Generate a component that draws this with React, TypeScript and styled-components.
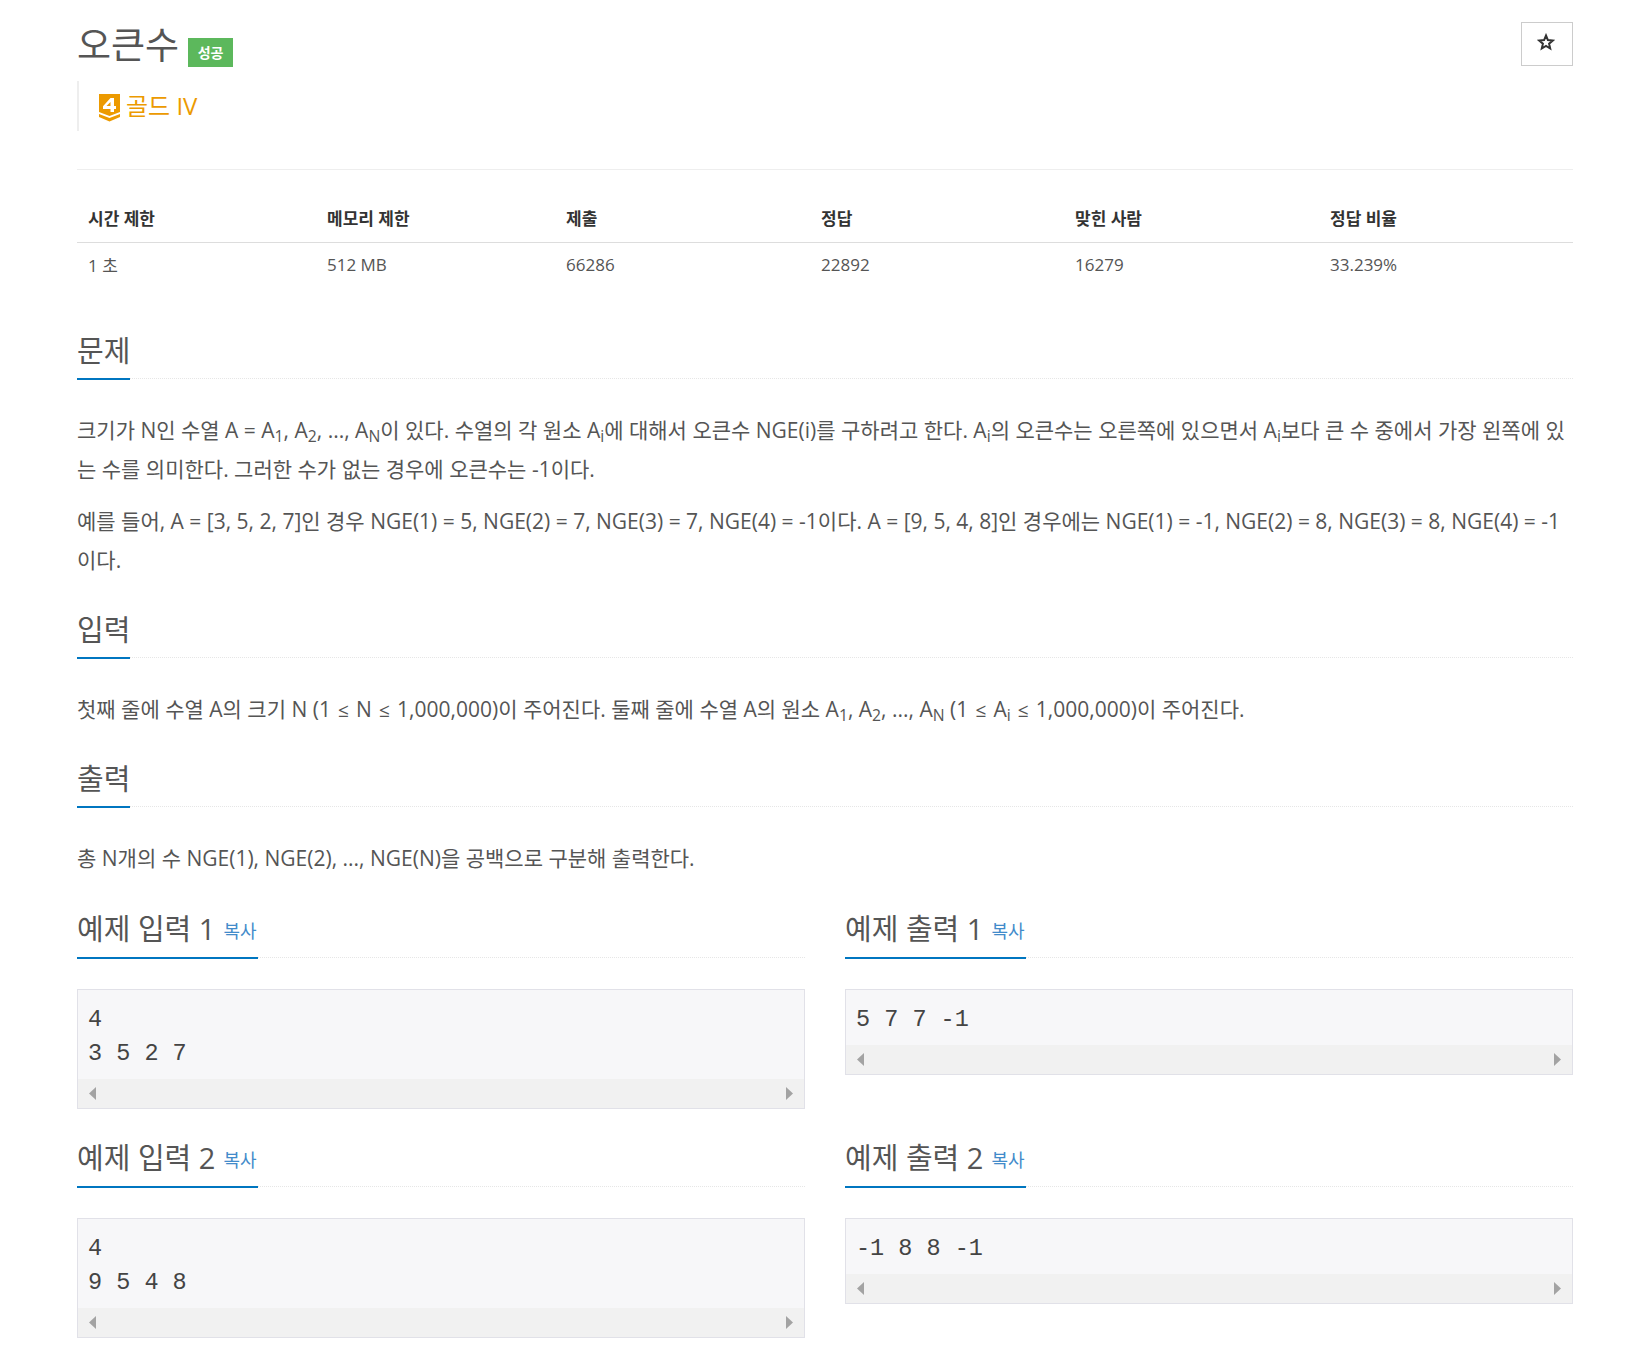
import React from "react";
import styled, { createGlobalStyle } from "styled-components";

const Global = createGlobalStyle`
  html, body { margin: 0; padding: 0; background: #fff; }
  body { font-family: "Open Sans", "Noto Sans CJK KR", sans-serif; color: #333; }
  * { box-sizing: border-box; }
`;
const Page = styled.div`
  width: 1640px; height: 1363px; padding: 0 67px 0 77px; overflow: hidden;
`;
const TitleBar = styled.div`
  display: flex; justify-content: space-between; align-items: flex-start; height: 81px; padding-top: 22px;
`;
const TitleGroup = styled.div`display: flex; align-items: flex-start; gap: 9px;`;
const Title = styled.h1`
  margin: 1px 0 0; font-size: 37px; font-weight: 400; line-height: 44px; color: #555;
`;
const Badge = styled.span`
  margin-top: 16px; width: 45px; height: 29px; background: #5cb85c; color: #fff; padding-bottom: 2px;
  font-size: 14px; font-weight: 700; display: flex; align-items: center; justify-content: center;
`;
const StarButton = styled.button`
  width: 52px; height: 44px; border: 1px solid #ccc; background: #fff; padding: 0 2px 5px 0;
  display: flex; align-items: center; justify-content: center; color: #333;
`;
const Tier = styled.div`
  height: 50px; border-left: 2px solid #eee; padding: 0 0 0 20px; display: flex; align-items: center; gap: 5px;
  color: #ec9a00; font-size: 24px; line-height: 30px;
  svg { margin-top: 4px; }
`;
const Divider = styled.hr`margin: 38px 0 0; border: 0; border-top: 1px solid #eee;`;
const Table = styled.table`
  width: 100%; margin-top: 22px; border-collapse: collapse; table-layout: fixed; font-size: 17px;
  th { text-align: left; font-weight: 700; padding: 2px 11px 0; height: 50px; border-bottom: 1px solid #ddd; color: #333; }
  td { padding: 0 11px; height: 44px; color: #555; }
`;
const Section = styled.section<{ $top: number }>`margin-top: ${p => p.$top}px;`;
const Heading = styled.div`
  border-bottom: 1px dotted #e6e6e6; height: 47px; display: flex;
`;
const HeadingText = styled.h2<{ $wide?: boolean }>`
  margin: 0 0 -1px; height: 48px; border-bottom: 2px solid #0076c0; padding-top: ${p => p.$wide ? 0 : 1}px;
  font-size: 29px; font-weight: 400; line-height: 36px; color: #555; white-space: nowrap;
  display: flex; align-items: baseline; gap: 8px; width: ${p => p.$wide ? "181px" : "53px"};
`;
const Copy = styled.span`font-size: 18px; color: #428bca; transform: translateY(-2px);`;
const Text = styled.p`
  margin: 0 0 13px; font-size: 21px; line-height: 39px; color: #555;
  sub { font-size: 75%; line-height: 0; position: relative; bottom: -0.25em; vertical-align: baseline; }
`;
const Leq = styled.span`font-size: 19px; margin: 0 1.700px;`;
const Body = styled.div`padding-top: 32px;`;
const Examples = styled.div`display: grid; grid-template-columns: 728px 728px; column-gap: 40px;`;
const Example = styled.div`height: 229px;`;
const Sample = styled.div`margin-top: 31px; background: #f7f7f9; border: 1px solid #e1e1e8;`;
const Pre = styled.pre`
  margin: 0; padding: 13px 10px 8px; font-family: "Liberation Mono", monospace; font-size: 23.500px; line-height: 34px; color: #444;
`;
const Scroll = styled.div`
  height: 29px; background: #f1f1f1; display: flex; justify-content: space-between; align-items: center; padding: 0 11px;
`;
const Arrow = styled.svg`width: 8px; height: 13px; fill: #a3a3a3; display: block;`;

const stats = [
  { head: "시간 제한", value: "1 초", width: 239 },
  { head: "메모리 제한", value: "512 MB", width: 239 },
  { head: "제출", value: "66286", width: 255 },
  { head: "정답", value: "22892", width: 254 },
  { head: "맞힌 사람", value: "16279", width: 255 },
  { head: "정답 비율", value: "33.239%", width: 254 },
];

const ExampleBlock = ({ title, text }: { title: string; text: string }) => (
  <Example>
    <Heading>
      <HeadingText $wide>{title}<Copy>복사</Copy></HeadingText>
    </Heading>
    <Sample>
      <Pre>{text}</Pre>
      <Scroll>
        <Arrow viewBox="0 0 8 13"><path d="M7 0v13L0 6.500z" /></Arrow>
        <Arrow viewBox="0 0 8 13"><path d="M1 0v13L8 6.500z" /></Arrow>
      </Scroll>
    </Sample>
  </Example>
);

export default function App() {
  return (
    <Page>
      <Global />
      <TitleBar>
        <TitleGroup>
          <Title>오큰수</Title>
          <Badge>성공</Badge>
        </TitleGroup>
        <StarButton aria-label="star">
          <svg width="18" height="18" viewBox="0 0 18 18" fill="none" stroke="#333" strokeWidth="2">
            <path d="M9 2.500l1.900 4.600 4.900.4-3.700 3.200 1.100 4.800L9 13l-4.200 2.500 1.100-4.800-3.700-3.200 4.900-.4z" />
          </svg>
        </StarButton>
      </TitleBar>
      <Tier>
        <svg width="22" height="28" viewBox="0 0 22 28">
          <path fill="#ec9a00" d="M0 0h21v18l-10.500 4L0 18z" />
          <path fill="#ec9a00" d="M0 20l10.500 4L21 20v3l-10.500 4.500L0 23z" />
          <path fill="#fff" fillRule="evenodd" d="M11.500 4h3.500v8h2v3h-2v3h-3.500v-3H4v-2.800zM11.500 8L7.500 12h4z" />
        </svg>
        <span>골드 IV</span>
      </Tier>
      <Divider />
      <Table>
        <colgroup>{stats.map(s => <col key={s.head} style={{ width: s.width }} />)}</colgroup>
        <thead><tr>{stats.map(s => <th key={s.head}>{s.head}</th>)}</tr></thead>
        <tbody><tr>{stats.map(s => <td key={s.head}>{s.value}</td>)}</tr></tbody>
      </Table>
      <Section $top={46}>
        <Heading><HeadingText>문제</HeadingText></Heading>
        <Body>
          <Text>크기가 N인 수열 A = A<sub>1</sub>, A<sub>2</sub>, ..., A<sub>N</sub>이 있다. 수열의 각 원소 A<sub>i</sub>에 대해서 오큰수 NGE(i)를 구하려고 한다. A<sub>i</sub>의 오큰수는 오른쪽에 있으면서 A<sub>i</sub>보다 큰 수 중에서 가장 왼쪽에 있는 수를 의미한다. 그러한 수가 없는 경우에 오큰수는 -1이다.</Text>
          <Text>예를 들어, A = [3, 5, 2, 7]인 경우 NGE(1) = 5, NGE(2) = 7, NGE(3) = 7, NGE(4) = -1이다. A = [9, 5, 4, 8]인 경우에는 NGE(1) = -1, NGE(2) = 8, NGE(3) = 8, NGE(4) = -1이다.</Text>
        </Body>
      </Section>
      <Section $top={31}>
        <Heading><HeadingText>입력</HeadingText></Heading>
        <Body>
          <Text>첫째 줄에 수열 A의 크기 N (1 <Leq>≤</Leq> N <Leq>≤</Leq> 1,000,000)이 주어진다. 둘째 줄에 수열 A의 원소 A<sub>1</sub>, A<sub>2</sub>, ..., A<sub>N</sub> (1 <Leq>≤</Leq> A<sub>i</sub> <Leq>≤</Leq> 1,000,000)이 주어진다.</Text>
        </Body>
      </Section>
      <Section $top={30}>
        <Heading><HeadingText>출력</HeadingText></Heading>
        <Body>
          <Text>총 N개의 수 NGE(1), NGE(2), ..., NGE(N)을 공백으로 구분해 출력한다.</Text>
        </Body>
      </Section>
      <Section $top={33}>
        <Examples>
          <ExampleBlock title="예제 입력 1" text={"4\n3 5 2 7"} />
          <ExampleBlock title="예제 출력 1" text={"5 7 7 -1"} />
          <ExampleBlock title="예제 입력 2" text={"4\n9 5 4 8"} />
          <ExampleBlock title="예제 출력 2" text={"-1 8 8 -1"} />
        </Examples>
      </Section>
    </Page>
  );
}
